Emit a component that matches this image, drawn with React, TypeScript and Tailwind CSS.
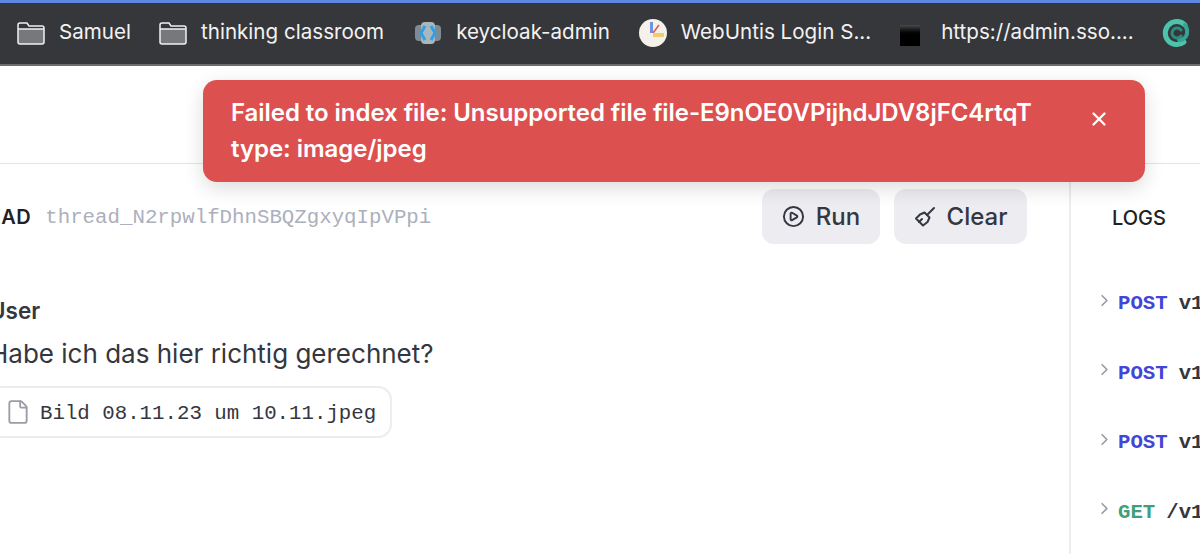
import { ChevronRight, CirclePlay, File, X } from "lucide-react";

const sans = "font-['Inter',sans-serif]";
const mono = "font-['Liberation_Mono',monospace]";

/* Bookmarks */
function FolderIcon() {
    return (
        <svg width="28" height="24" viewBox="0 0 28 24" className="shrink-0">
            <path d="M1 8h26v13a2 2 0 0 1-2 2H3a2 2 0 0 1-2-2z" fill="#77787b" />
            <path d="M1 4a2 2 0 0 1 2-2h7l2 3h13a2 2 0 0 1 2 2v14a2 2 0 0 1-2 2H3a2 2 0 0 1-2-2z" fill="none" stroke="#f1f1f1" strokeWidth="1.5" />
            <path d="M1 8h26" stroke="#f1f1f1" strokeWidth="1.5" />
        </svg>
    );
}

function Bookmark({ icon, label, gap }: { icon: React.ReactNode; label: string; gap: string }) {
    return (
        <div className={`flex items-center ${gap}`}>
            {icon}
            <span className="text-[20.6px] leading-none text-[#f2f2f3] whitespace-nowrap">{label}</span>
        </div>
    );
}

function BookmarkBar() {
    return (
        <div className={`${sans} h-[66px] shrink-0 border-t-[3px] border-b-2 border-t-[#5d87e3] border-b-[#6b6c6e] bg-[#36373a] flex items-center overflow-hidden pl-[17px] pb-[2px]`}>
            <div className="mr-[28px]">
                <Bookmark gap="gap-[14px]" icon={<FolderIcon />} label="Samuel" />
            </div>
            <div className="mr-[30px]">
                <Bookmark gap="gap-[14px]" icon={<FolderIcon />} label="thinking classroom" />
            </div>
            <div className="mr-[29px]">
                <Bookmark
                    gap="gap-[14px]"
                    label="keycloak-admin"
                    icon={
                        <svg width="28" height="26" viewBox="0 0 28 26" className="blur-[0.6px]">
                            <rect x="1" y="5" width="26" height="16" rx="4" fill="#7f8b94" />
                            <rect x="7" y="2" width="14" height="22" rx="4" fill="#aab5bc" />
                            <path d="M11 6 7 13l4 7M17 6l4 7-4 7" fill="none" stroke="#2f9fe6" strokeWidth="3" />
                        </svg>
                    }
                />
            </div>
            <div className="mr-[29px]">
                <Bookmark
                    gap="gap-[14px]"
                    label="WebUntis Login S..."
                    icon={
                        <svg width="28" height="30" viewBox="0 0 28 30">
                            <circle cx="14" cy="15" r="14" fill="#f4f1ea" />
                            <path d="M14 15V4l-3 0v11z" fill="#6f93e0" />
                            <path d="M14 15l6-8" stroke="#e2574c" strokeWidth="1.5" />
                            <path d="M14 15h11v4H14z" fill="#efcd6b" />
                        </svg>
                    }
                />
            </div>
            <div className="mr-[27px]">
                <Bookmark
                    gap="gap-[21px]"
                    label="https://admin.sso...."
                    icon={<div className="w-[20px] h-[21px] mt-[6px] bg-gradient-to-b from-[#4a4a4a] via-black to-black" />}
                />
            </div>
            <svg width="29" height="32" viewBox="0 0 29 32" className="shrink-0" fill="none" strokeLinecap="round">
                <path d="M24 8A11.5 11.5 0 1 0 23 25" stroke="#4cc3ab" strokeWidth="5" />
                <path d="M24 8a12 12 0 0 1 2 9c-1 4-5 6-8 6" stroke="#35a593" strokeWidth="4" />
                <path d="M20 13a5 5 0 1 0 0 6" stroke="#2a8d7e" strokeWidth="3" />
            </svg>
        </div>
    );
}

/* Toast */
function Toast() {
    return (
        <div className={`${sans} absolute left-[203px] top-[80px] w-[942px] h-[102px] rounded-[14px] bg-[#dd5050] shadow-[0_6px_20px_rgba(0,0,0,0.14)] pl-[28px] pr-[35px] flex items-center justify-between text-white`}>
            <p className="w-[810px] text-[24px] font-semibold leading-[36px] tracking-[-0.05px]">
                Failed to index file: Unsupported file file-E9nOE0VPijhdJDV8jFC4rtqT type: image/jpeg
            </p>
            <X size={22} strokeWidth={2.5} className="mt-[-24px]" />
        </div>
    );
}

/* Thread panel */
function BroomIcon() {
    return (
        <svg width="22" height="22" viewBox="0 0 22 22" fill="none" stroke="currentColor" strokeWidth="2" strokeLinejoin="round" strokeLinecap="round">
            <path d="M20 2l-7 7" />
            <path d="M10.5 6.5l5 5-2 4.5-4.5 3.5L2 12.5 6 8.5z" />
            <path d="M5 16l3-3" />
        </svg>
    );
}

function ActionButton({ icon, label, width }: { icon: React.ReactNode; label: string; width: string }) {
    return (
        <button className={`${width} h-[55px] rounded-[12px] bg-[#ececf1] flex items-center justify-center gap-[11px] text-[24px] font-medium text-[#353740]`}>
            {icon}
            {label}
        </button>
    );
}

function Thread() {
    return (
        <div className="w-[1069px] shrink-0 overflow-hidden">
            <div className="flex items-center justify-between h-[55px] mt-[25px] pr-[42px]">
                <div className="flex items-center gap-[14px] ml-[-54px]">
                    <span className="text-[20px] font-semibold text-[#202123] tracking-[0.5px]">THREAD</span>
                    <span className={`${mono} mt-[2px] text-[20.75px] text-[#acb0bc]`}>thread_N2rpwlfDhnSBQZgxyqIpVPpi</span>
                </div>
                <div className="flex gap-[14px]">
                    <ActionButton width="w-[118px]" label="Run" icon={<CirclePlay size={23} strokeWidth={2} />} />
                    <ActionButton width="w-[133px]" label="Clear" icon={<BroomIcon />} />
                </div>
            </div>
            <div className="mt-[51px] ml-[-11px]">
                <p className="text-[22.5px] font-semibold leading-[32px] text-[#353740]">User</p>
                <p className="mt-[9px] text-[26px] leading-[36px] text-[#353740]">Habe ich das hier richtig gerechnet?</p>
                <div className="mt-[14px] w-[403px] h-[52px] rounded-[14px] border-2 border-[#ececf1] flex items-center pl-[14px] gap-[9px]">
                    <File size={26} strokeWidth={1.7} className="text-[#9a9ca6]" />
                    <span className={`${mono} mt-[3px] text-[20.75px] text-[#353740] whitespace-nowrap`}>Bild 08.11.23 um 10.11.jpeg</span>
                </div>
            </div>
        </div>
    );
}

/* Logs panel */
const LOGS = [
    { method: "POST", path: "v1", color: "text-[#3f46d8]" },
    { method: "POST", path: "v1", color: "text-[#3f46d8]" },
    { method: "POST", path: "v1", color: "text-[#3f46d8]" },
    { method: "GET", path: "/v1", color: "text-[#3f9f7c]" },
];

function Logs() {
    return (
        <div className="flex-1 min-w-0 border-l-2 border-[#ececf1] overflow-hidden">
            <p className="ml-[41px] mt-[40px] text-[20px] font-medium leading-[28px] text-[#202123]">LOGS</p>
            <div className="mt-[57px] ml-[24px] flex flex-col gap-[39px]">
                {LOGS.map((log, i) => (
                    <div key={i} className={`${mono} flex items-center text-[20.7px] leading-[30.5px] font-bold whitespace-nowrap`}>
                        <ChevronRight size={19} strokeWidth={2.2} className="text-[#9a9ca6] mt-[-8px] mr-[4px] shrink-0" />
                        <span className={log.color}>{log.method}</span>
                        <span className="ml-[11px] text-[#353740]">{log.path}</span>
                    </div>
                ))}
            </div>
        </div>
    );
}

export default function App() {
    return (
        <div className={`${sans} relative w-[1200px] h-[554px] overflow-hidden bg-white flex flex-col`}>
            <BookmarkBar />
            <div className="h-[98px] shrink-0 border-b border-[#e4e4e8]" />
            <div className="flex flex-1 min-h-0">
                <Thread />
                <Logs />
            </div>
            <Toast />
        </div>
    );
}
